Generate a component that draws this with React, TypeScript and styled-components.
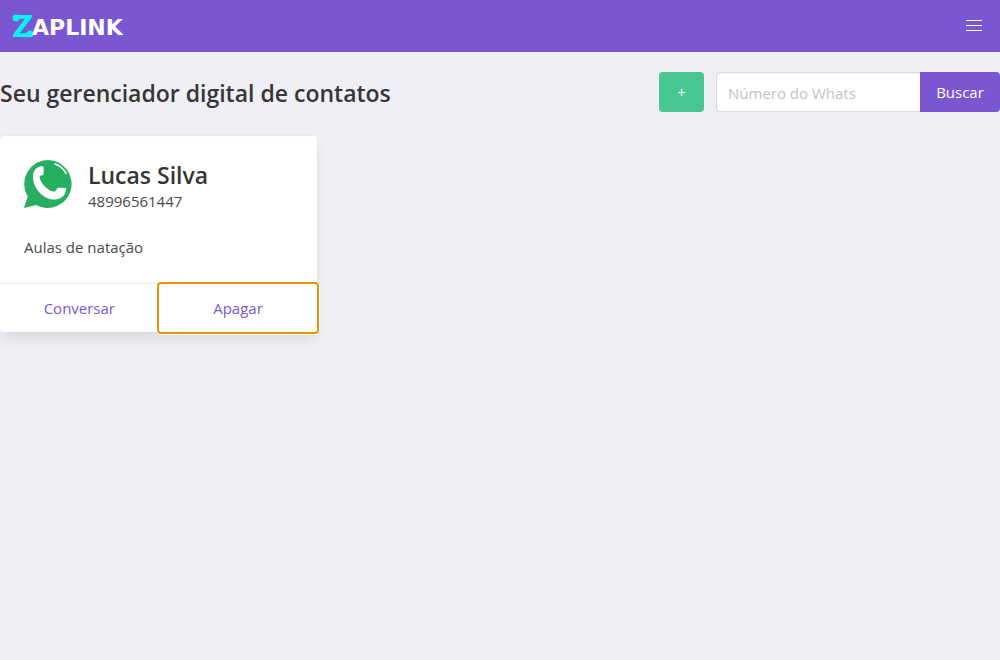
import React from 'react';
import styled, { createGlobalStyle } from 'styled-components';

const GlobalStyle = createGlobalStyle`
  *, *::before, *::after { box-sizing: border-box; }
  html { background: #f0eff5; }
  body {
    margin: 0;
    font-family: "Open Sans", "Noto Sans", sans-serif;
    font-size: 15px;
    line-height: 24px;
    color: #4a4a4a;
  }
  h1, p { margin: 0; }
  button, input { font: inherit; }
`;

const Navbar = styled.nav`
  display: flex;
  justify-content: space-between;
  align-items: stretch;
  height: 52px;
  background: #7a57d1;
`;

const Brand = styled.a`
  display: flex;
  align-items: center;
  padding: 0 8px;
`;

const Burger = styled.button`
  display: flex;
  flex-direction: column;
  align-items: center;
  justify-content: center;
  gap: 4px;
  width: 52px;
  padding: 0 0 2px;
  border: 0;
  background: transparent;
  cursor: pointer;
`;

const BurgerLine = styled.span`
  width: 16px;
  height: 1px;
  background: #fff;
`;

const Page = styled.main`
  display: flex;
  flex-direction: column;
  gap: 24px;
  padding: 20px 0 32px;
`;

const Toolbar = styled.div`
  display: flex;
  align-items: center;
  justify-content: space-between;
`;

const Title = styled.h1`
  padding-top: 2px;
  color: #363636;
  font-size: 23px;
  font-weight: 600;
  line-height: 32px;
`;

const Actions = styled.div`
  display: flex;
  gap: 12px;
`;

const AddButton = styled.button`
  width: 45px;
  height: 40px;
  padding: 0;
  border: 0;
  border-radius: 4px;
  background: #48c78e;
  color: #fff;
  cursor: pointer;
`;

const SearchForm = styled.form`
  display: flex;
`;

const SearchInput = styled.input`
  width: 204px;
  height: 40px;
  padding: 2px 11px 0;
  border: 1px solid #dbdbdb;
  border-right: 0;
  border-radius: 4px 0 0 4px;
  background: #fff;
  box-shadow: inset 0 1px 2px rgba(10, 10, 10, 0.05);
  color: #363636;
  outline: 0;
  &::placeholder { color: #c3c3c3; opacity: 1; }
`;

const SearchButton = styled.button`
  width: 80px;
  height: 40px;
  padding: 0;
  border: 0;
  border-radius: 0 4px 4px 0;
  background: #7a57d1;
  color: #fff;
  cursor: pointer;
`;

const CardGrid = styled.section`
  display: grid;
  grid-template-columns: repeat(3, 1fr);
  gap: 24px;
`;

const Card = styled.article`
  border-radius: 4px;
  background: #fff;
  box-shadow: 0 8px 16px -2px rgba(10, 10, 10, 0.1), 0 0 0 1px rgba(10, 10, 10, 0.02);
`;

const CardContent = styled.div`
  display: flex;
  flex-direction: column;
  gap: 23px;
  padding: 24px;
`;

const Contact = styled.div`
  display: flex;
  gap: 16px;
`;

const ContactName = styled.p`
  color: #363636;
  font-size: 23px;
  font-weight: 600;
  line-height: 30px;
`;

const ContactPhone = styled.p`
  line-height: 22px;
`;

const CardFooter = styled.footer`
  display: flex;
  border-top: 1px solid #ededed;
`;

const FooterAction = styled.button<{ $focused?: boolean }>`
  flex: 1;
  height: 48px;
  padding: 0;
  border: 0;
  border-radius: ${({ $focused }) => ($focused ? '2px' : '4px')};
  background: #fff;
  color: #7a57d1;
  cursor: pointer;
  outline: ${({ $focused }) => ($focused ? '2px solid #e59700' : '0')};
  box-shadow: ${({ $focused }) => ($focused ? '0 0 0 3px #fff' : 'none')};
`;

const Logo = () => (
  <svg width="120" height="52" viewBox="0 0 120 52" role="img" aria-label="Zaplink">
    <g fill="#00f6f0">
      <text x="6" y="37" fontFamily="Open Sans, sans-serif" fontSize="31" fontWeight="700" fontStyle="italic">Z</text>
      <circle cx="8" cy="18" r="3.5" />
      <circle cx="22" cy="34" r="3.5" />
    </g>
    <text x="24" y="35" fill="#fff" fontFamily="DejaVu Sans, sans-serif" fontSize="22" fontWeight="700">APLINK</text>
  </svg>
);

const WhatsIcon = () => (
  <svg width="48" height="48" viewBox="0 0 48 48" aria-hidden="true">
    <path fill="#27ae60" d="M24 0a24 24 0 1 1-12 45L0 48l3.700-11.500A24 24 0 0 1 24 0Z" />
    <path
      fill="#fff"
      d="M9.500 12.500C11.500 7.500 15 6 19.300 6.200c.5 2.800.6 5.500.2 8.600l-3.800 1.200c-.8 5.500 8.200 16 15.500 15.600l2.300-3.600c3-.4 6-.3 8.700.2-.2 6.500-4 10.500-10.500 11.300C19.500 40.800 6 26 9.500 12.500Z"
    />
    <path fill="none" stroke="#fff" strokeWidth="1.500" strokeLinecap="round" d="M31 4c5 1.600 8.800 5 11 9.500" />
  </svg>
);

export default function App() {
  return (
    <>
      <GlobalStyle />
      <Navbar>
        <Brand href="#"><Logo /></Brand>
        <Burger type="button" aria-label="Menu">
          <BurgerLine />
          <BurgerLine />
          <BurgerLine />
        </Burger>
      </Navbar>
      <Page>
        <Toolbar>
          <Title>Seu gerenciador digital de contatos</Title>
          <Actions>
            <AddButton type="button">+</AddButton>
            <SearchForm onSubmit={(event) => event.preventDefault()}>
              <SearchInput type="text" placeholder="Número do Whats" aria-label="Número do Whats" />
              <SearchButton type="submit">Buscar</SearchButton>
            </SearchForm>
          </Actions>
        </Toolbar>
        <CardGrid>
          <Card>
            <CardContent>
              <Contact>
                <WhatsIcon />
                <div>
                  <ContactName>Lucas Silva</ContactName>
                  <ContactPhone>48996561447</ContactPhone>
                </div>
              </Contact>
              <p>Aulas de natação</p>
            </CardContent>
            <CardFooter>
              <FooterAction type="button">Conversar</FooterAction>
              <FooterAction type="button" $focused>Apagar</FooterAction>
            </CardFooter>
          </Card>
        </CardGrid>
      </Page>
    </>
  );
}
